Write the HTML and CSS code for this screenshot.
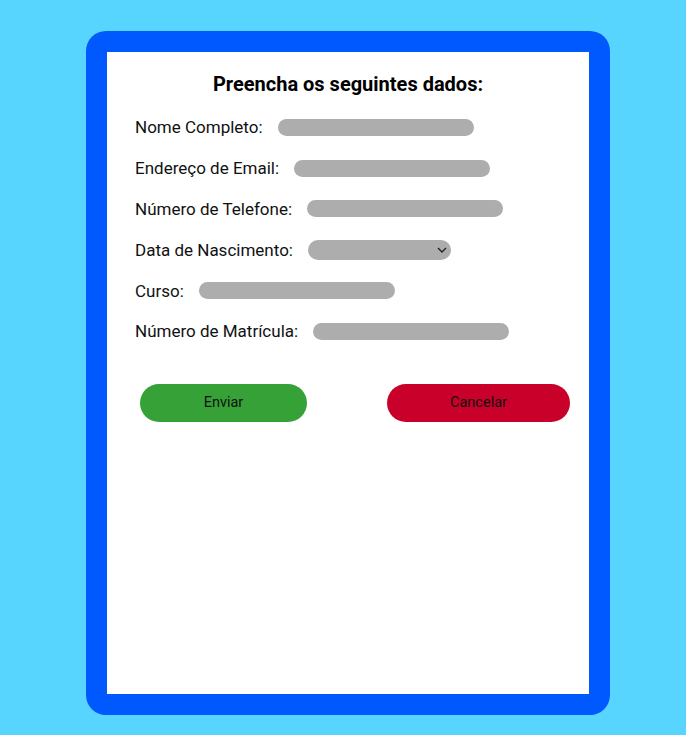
FILE: index.html
```html
<!DOCTYPE html>
<html lang="pt">
<head>
<meta charset="utf-8">
<link rel="stylesheet" href="styles.css">
</head>
<body>
<div class="card">
  <form class="form">
    <h1 class="title">Preencha os seguintes dados:</h1>
    <div class="row"><label class="label">Nome Completo:</label><input class="field" type="text"></div>
    <div class="row"><label class="label">Endereço de Email:</label><input class="field" type="text"></div>
    <div class="row"><label class="label">Número de Telefone:</label><input class="field" type="text"></div>
    <div class="row"><label class="label">Data de Nascimento:</label><select class="field select"><option></option></select></div>
    <div class="row"><label class="label">Curso:</label><input class="field" type="text"></div>
    <div class="row"><label class="label">Número de Matrícula:</label><input class="field" type="text"></div>
    <div class="actions">
      <button type="button" class="btn btn-send">Enviar</button>
      <button type="button" class="btn btn-cancel">Cancelar</button>
    </div>
  </form>
</div>
</body>
</html>
```
FILE: styles.css
```css
html, body {
  margin: 0;
  padding: 0;
}
body {
  background: #58d5ff;
  font-family: Roboto, "Liberation Sans", sans-serif;
  width: 686px;
  height: 735px;
  overflow: hidden;
}
.card {
  box-sizing: border-box;
  margin: 31px 0 0 86px;
  width: 524px;
  height: 684px;
  border: 21px solid #0059ff;
  border-radius: 20px;
  background: #0059ff;
}
.form {
  background: #ffffff;
  height: 100%;
  padding: 0 19px 0 28px;
  box-sizing: border-box;
  display: flex;
  flex-direction: column;
}
.title {
  margin: 20px 0 11px;
  font-size: 20px;
  line-height: 24px;
  font-weight: 700;
  text-align: center;
  color: #000;
  padding-right: 9px;
  padding-left: 0;
}
.row {
  height: 40.8px;
  flex: none;
  display: flex;
  align-items: center;
}
.label {
  font-size: 17px;
  line-height: 20px;
  color: #111;
  margin-right: 15px;
}
.field {
  box-sizing: border-box;
  width: 196px;
  height: 17px;
  border: none;
  border-radius: 9px;
  background: #adadad;
  padding: 0;
  outline: none;
}
.select {
  appearance: none;
  -webkit-appearance: none;
  width: 143px;
  height: 20px;
  border-radius: 10px;
  background: #adadad url("data:image/svg+xml;utf8,<svg xmlns='http://www.w3.org/2000/svg' width='10' height='6' viewBox='0 0 10 6'><path d='M1 1l4 4 4-4' fill='none' stroke='%23222' stroke-width='1.4'/></svg>") no-repeat right 4px center;
}
.actions {
  display: flex;
  justify-content: space-between;
  margin-top: 32px;
  padding-left: 5px;
}
.btn {
  height: 38px;
  border: none;
  border-radius: 19px;
  font-family: Roboto, "Liberation Sans", sans-serif;
  font-size: 14.5px;
  color: #111;
  padding: 0;
}
.btn-send {
  width: 167px;
  background: #35a137;
}
.btn-cancel {
  width: 183px;
  background: #c8002a;
}
```
